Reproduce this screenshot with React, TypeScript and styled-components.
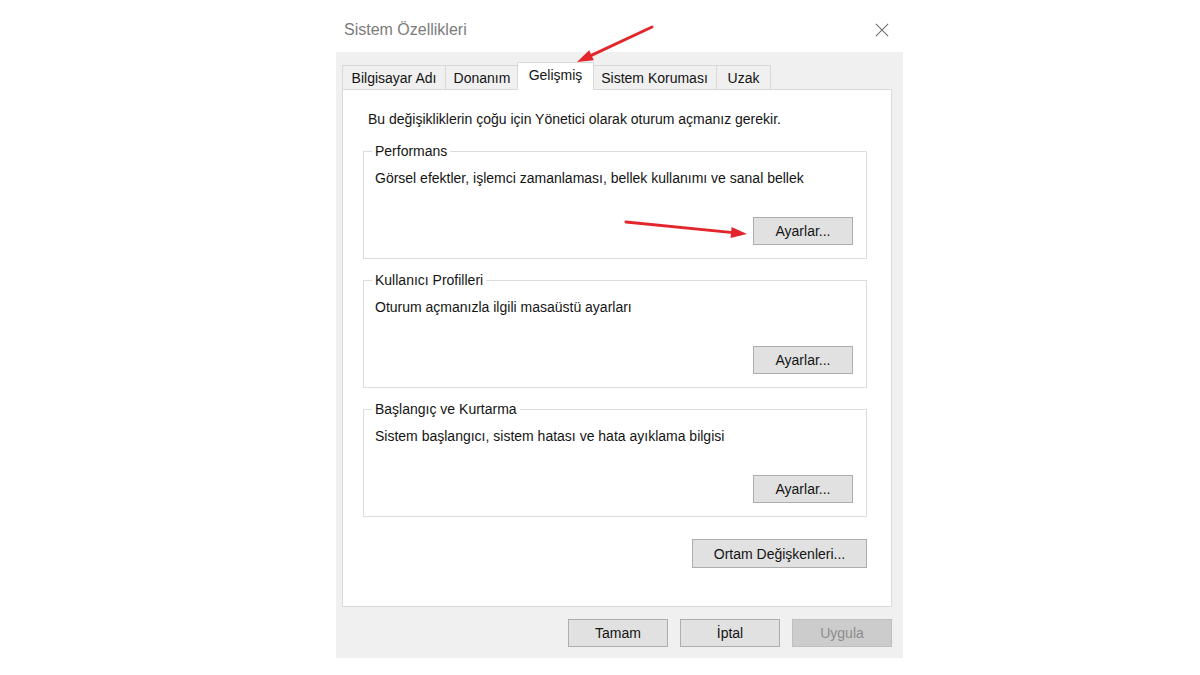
import styled, { createGlobalStyle } from "styled-components";

const GlobalStyle = createGlobalStyle`
  html, body {
    margin: 0;
    background: #ffffff;
  }
  body {
    font-family: "Liberation Sans", Arial, sans-serif;
    color: #141414;
  }
`;

interface Point {
  x: number;
  y: number;
}

const tabs = [
  { label: "Bilgisayar Adı", width: 104 },
  { label: "Donanım", width: 74 },
  { label: "Gelişmiş", width: 75, active: true },
  { label: "Sistem Koruması", width: 125 },
  { label: "Uzak", width: 55 },
];

const groups = [
  {
    title: "Performans",
    text: "Görsel efektler, işlemci zamanlaması, bellek kullanımı ve sanal bellek",
  },
  {
    title: "Kullanıcı Profilleri",
    text: "Oturum açmanızla ilgili masaüstü ayarları",
  },
  {
    title: "Başlangıç ve Kurtarma",
    text: "Sistem başlangıcı, sistem hatası ve hata ayıklama bilgisi",
  },
];

// red annotation arrow, head drawn as a triangle at the tip
function Arrow({ from, to }: { from: Point; to: Point }) {
  const dx = to.x - from.x;
  const dy = to.y - from.y;
  const len = Math.hypot(dx, dy);
  const ux = dx / len;
  const uy = dy / len;
  const headLen = 16;
  const headHalf = 5.5;
  const bx = to.x - ux * headLen;
  const by = to.y - uy * headLen;
  const px = -uy * headHalf;
  const py = ux * headHalf;
  const head = `${to.x},${to.y} ${bx + px},${by + py} ${bx - px},${by - py}`;
  return (
    <g>
      <line
        x1={from.x}
        y1={from.y}
        x2={bx + ux * 2}
        y2={by + uy * 2}
        stroke="#e3262b"
        strokeWidth={3}
        strokeLinecap="round"
      />
      <polygon points={head} fill="#e3262b" />
    </g>
  );
}

export default function App() {
  return (
    <>
      <GlobalStyle />
      <Page>
        <Dialog>
          <TitleBar>
            <Title>Sistem Özellikleri</Title>
            <CloseIcon viewBox="0 0 16 16">
              <path d="M1 1 L15 15 M15 1 L1 15" />
            </CloseIcon>
          </TitleBar>
          <Body>
            <TabStrip>
              {tabs.map((t) => (
                <Tab key={t.label} $width={t.width} $active={!!t.active}>
                  {t.label}
                </Tab>
              ))}
            </TabStrip>
            <Panel>
              <Intro>
                Bu değişikliklerin çoğu için Yönetici olarak oturum açmanız
                gerekir.
              </Intro>
              {groups.map((g) => (
                <Group key={g.title}>
                  <Legend>{g.title}</Legend>
                  <GroupText>{g.text}</GroupText>
                  <ButtonRow>
                    <Button $width={100}>Ayarlar...</Button>
                  </ButtonRow>
                </Group>
              ))}
              <EnvRow>
                <Button $width={175} $height={29}>
                  Ortam Değişkenleri...
                </Button>
              </EnvRow>
            </Panel>
            <Footer>
              <Button $width={100}>Tamam</Button>
              <Button $width={100}>İptal</Button>
              <Button $width={100} disabled>
                Uygula
              </Button>
            </Footer>
          </Body>
        </Dialog>
        <Annotations viewBox="0 0 1200 675">
          <Arrow from={{ x: 652, y: 27 }} to={{ x: 577, y: 62 }} />
          <Arrow from={{ x: 626, y: 222 }} to={{ x: 747, y: 234 }} />
        </Annotations>
      </Page>
    </>
  );
}

const Page = styled.div`
  position: relative;
  width: 1200px;
  height: 675px;
  overflow: hidden;
  box-sizing: border-box;
  padding-left: 336px;
`;

const Dialog = styled.div`
  width: 567px;
  display: flex;
  flex-direction: column;
`;

const TitleBar = styled.div`
  height: 52px;
  box-sizing: border-box;
  padding: 7px 14px 0 8px;
  display: flex;
  align-items: center;
  justify-content: space-between;
  background: #ffffff;
`;

const Title = styled.span`
  font-size: 16px;
  color: #7b7b7b;
`;

const CloseIcon = styled.svg`
  width: 14px;
  height: 14px;
  fill: none;
  stroke: #6a6a6a;
  stroke-width: 1.2;
`;

const Body = styled.div`
  background: #f0f0f0;
  padding: 11px 11px 11px 6px;
`;

const TabStrip = styled.div`
  display: flex;
  align-items: flex-end;
  height: 27px;
  margin-bottom: -1px;
  position: relative;
  z-index: 1;
`;

const Tab = styled.div<{ $width: number; $active: boolean }>`
  width: ${(p) => (p.$active ? p.$width + 2 : p.$width)}px;
  height: ${(p) => (p.$active ? 28 : 25)}px;
  margin-left: ${(p) => (p.$active ? -2 : -1)}px;
  margin-right: ${(p) => (p.$active ? -1 : 0)}px;
  box-sizing: border-box;
  display: flex;
  align-items: center;
  justify-content: center;
  padding-bottom: ${(p) => (p.$active ? 3 : 0)}px;
  border: 1px solid #d9d9d9;
  border-bottom: ${(p) => (p.$active ? "none" : "1px solid #d9d9d9")};
  background: ${(p) => (p.$active ? "#ffffff" : "#f0f0f0")};
  font-size: 14px;
  position: relative;
  z-index: ${(p) => (p.$active ? 2 : 1)};

  &:first-child {
    margin-left: 0;
  }
`;

const Panel = styled.div`
  height: 518px;
  box-sizing: border-box;
  background: #ffffff;
  border: 1px solid #d9d9d9;
  padding: 20px 24px 0 20px;
  display: flex;
  flex-direction: column;
`;

const Intro = styled.div`
  margin-left: 5px;
  font-size: 14px;
  line-height: 18px;
  margin-bottom: 15px;
`;

const Group = styled.fieldset`
  margin: 0 0 13px 0;
  padding: 0 13px 13px 11px;
  border: 1px solid #dcdcdc;
  min-width: 0;
`;

const Legend = styled.legend`
  margin-left: -3px;
  padding: 0 3px;
  font-size: 14px;
  line-height: 16px;
`;

const GroupText = styled.div`
  margin-top: 10px;
  font-size: 14px;
  line-height: 18px;
`;

const ButtonRow = styled.div`
  display: flex;
  justify-content: flex-end;
  margin-top: 30px;
`;

const EnvRow = styled.div`
  display: flex;
  justify-content: flex-end;
  margin-top: 9px;
`;

const Button = styled.button<{ $width: number; $height?: number }>`
  width: ${(p) => p.$width}px;
  height: ${(p) => p.$height ?? 28}px;
  padding: 0;
  box-sizing: border-box;
  border: 1px solid #adadad;
  background: #e1e1e1;
  color: #141414;
  font-family: "Liberation Sans", Arial, sans-serif;
  font-size: 14px;

  &:disabled {
    background: #cccccc;
    border-color: #bfbfbf;
    color: #8c8c8c;
  }
`;

const Footer = styled.div`
  display: flex;
  justify-content: flex-end;
  gap: 12px;
  margin-top: 12px;
`;

const Annotations = styled.svg`
  position: absolute;
  left: 0;
  top: 0;
  width: 1200px;
  height: 675px;
  pointer-events: none;
`;
